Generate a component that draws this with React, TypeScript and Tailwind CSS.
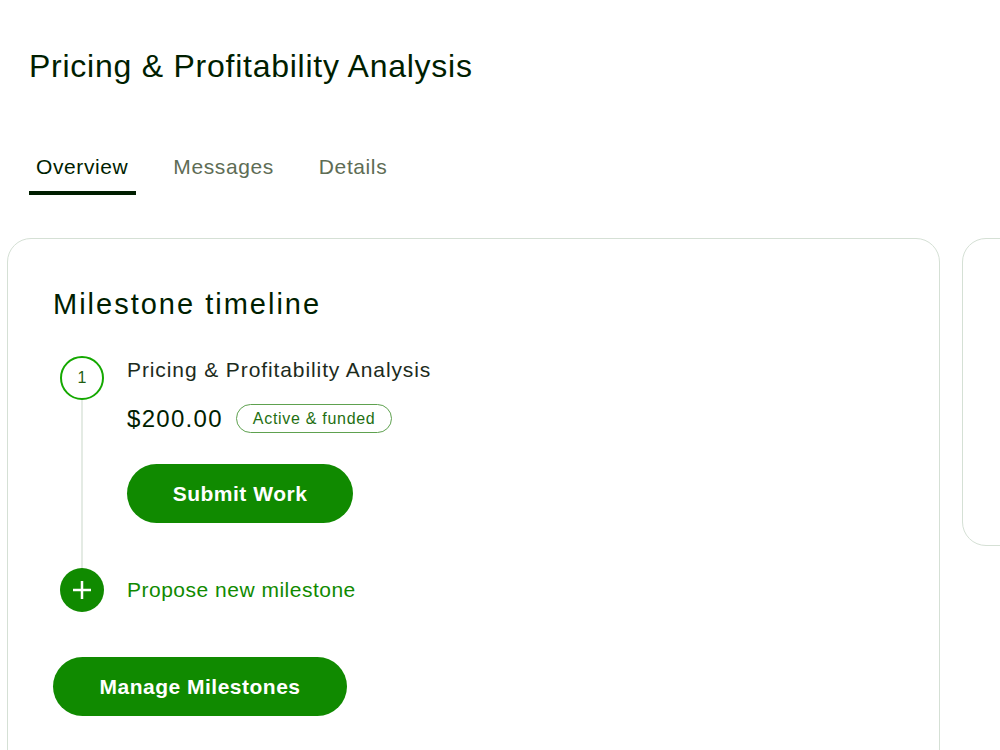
import React, { useState } from "react";

const font = { fontFamily: '"Liberation Sans", Arial, sans-serif' };

const tabs = ["Overview", "Messages", "Details"];

const App = () => {
  const [tab, setTab] = useState("Overview");

  return (
    <div
      className="w-full h-[750px] overflow-hidden bg-white text-[#001e00]"
      style={font}
    >
      {/* header */}
      <div className="px-[29px] pt-[46px]">
        <h1 className="text-[32px] leading-[40px] font-normal tracking-[0.75px]">
          Pricing &amp; Profitability Analysis
        </h1>
      </div>

      {/* tabs */}
      <div className="flex flex-row pl-[29px] mt-[58px] gap-[30px]">
        {tabs.map((t) => (
          <button
            key={t}
            onClick={() => setTab(t)}
            className={
              tab === t
                ? "pl-[7px] pr-[8px] pt-[9px] pb-[10px] text-[21px] leading-[28px] tracking-[0.6px] text-[#001e00] border-b-[4px] border-[#001e00]"
                : "pl-[7px] pr-[8px] pt-[9px] pb-[10px] text-[21px] leading-[28px] tracking-[0.6px] text-[#5e6d55] border-b-[4px] border-transparent"
            }
          >
            {t}
          </button>
        ))}
      </div>

      {/* cards */}
      <div className="flex flex-row gap-[22px] pl-[7px] mt-[43px]">
        <div className="w-[933px] shrink-0 h-[600px] rounded-[24px] border border-[#d5e0d5] pt-[47px] px-[45px]">
          <h2 className="text-[29px] leading-[36px] tracking-[2px]">Milestone timeline</h2>

          <div className="mt-[34px]">
            {/* milestone 1 */}
            <div className="flex flex-row gap-[16px]">
              <div className="w-[58px] flex flex-col items-center shrink-0">
                <div className="w-[44px] h-[44px] rounded-full border-[2.5px] border-[#14a800] flex items-center justify-center text-[16px] text-[#1f5f12]">
                  1
                </div>
                <div className="w-[2px] flex-1 bg-[#e4ebe4]"></div>
              </div>
              <div className="pb-[45px]">
                <div className="text-[21px] leading-[28px] tracking-[0.9px] text-[#1c2b1c]">
                  Pricing &amp; Profitability Analysis
                </div>
                <div className="flex flex-row items-center gap-[13px] mt-[18px] h-[33px]">
                  <span className="text-[24px] leading-[30px] tracking-[1.3px]">$200.00</span>
                  <span className="rounded-full border border-[#5ea14f] px-[16px] h-[29px] flex items-center text-[16px] tracking-[0.7px] text-[#1f6f12]">
                    Active &amp; funded
                  </span>
                </div>
                <button className="mt-[29px] w-[226px] h-[59px] rounded-full bg-[#108a00] text-white text-[21px] tracking-[0.5px] font-bold">
                  Submit Work
                </button>
              </div>
            </div>

            {/* propose */}
            <div className="flex flex-row gap-[16px] items-center">
              <div className="w-[58px] flex justify-center shrink-0">
                <div className="w-[44px] h-[44px] rounded-full bg-[#108a00] flex items-center justify-center">
                  <svg width="22" height="22" viewBox="0 0 22 22">
                    <path
                      d="M11 2v18M2 11h18"
                      stroke="white"
                      strokeWidth="2.5"
                      fill="none"
                    />
                  </svg>
                </div>
              </div>
              <span className="text-[21px] tracking-[0.5px] text-[#108a00] font-medium">
                Propose new milestone
              </span>
            </div>
          </div>

          <button className="mt-[45px] w-[294px] h-[59px] rounded-full bg-[#108a00] text-white text-[21px] tracking-[0.5px] font-bold">
            Manage Milestones
          </button>
        </div>

        <div className="w-[300px] shrink-0 h-[308px] rounded-[24px] border border-[#d5e0d5]"></div>
      </div>
    </div>
  );
};

export default App;
